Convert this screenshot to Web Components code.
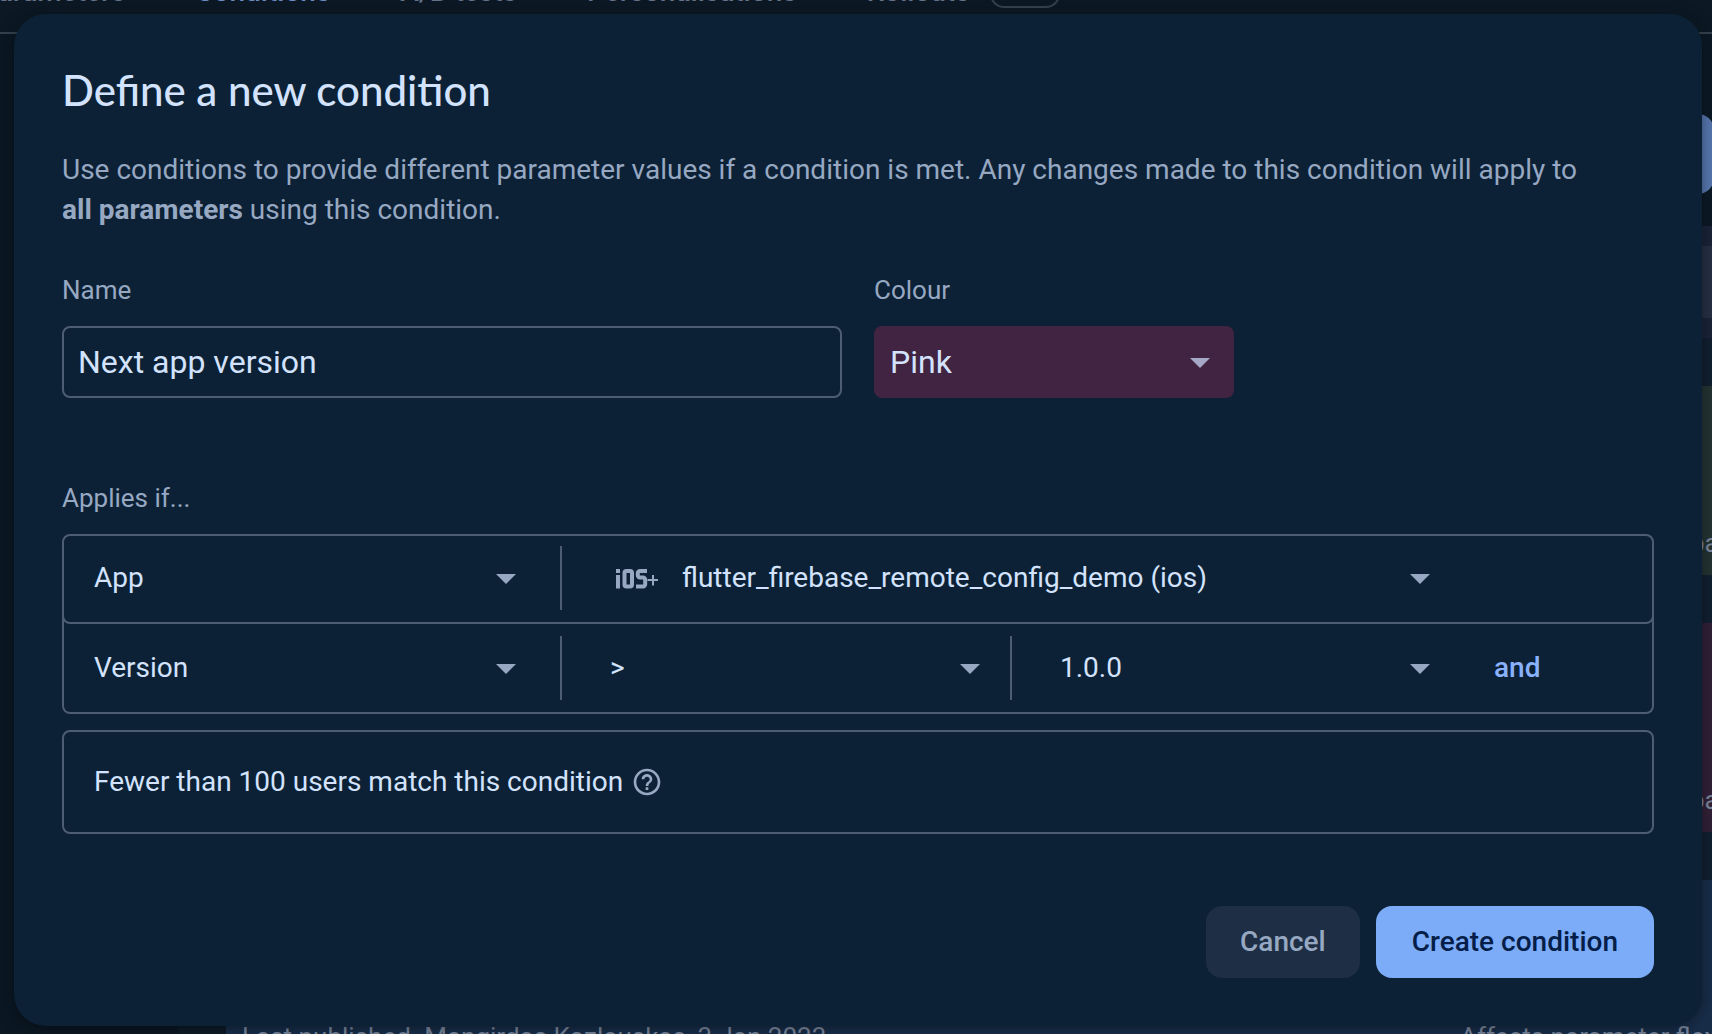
<!DOCTYPE html>
<html lang="en-GB">
<head>
<meta charset="utf-8">
<meta name="viewport" content="width=device-width, initial-scale=1">
<title>Define a new condition</title>
<style>
  html, body { margin: 0; height: 100%; }
  body {
    position: relative;
    overflow: hidden;
    background: #0c1925;
    font-family: Roboto, "Liberation Sans", sans-serif;
    font-size: 28px;
    line-height: 40px;
    color: #d3e3fd;
    --surface: #0c2135;
    --muted: #97a8c2;
    --outline: #4d5d74;
  }
</style>
</head>
<body>
<console-backdrop></console-backdrop>
<condition-dialog></condition-dialog>

<script>
const define = (name, html) => {
  const template = document.createElement('template');
  template.innerHTML = html;
  customElements.define(name, class extends HTMLElement {
    constructor() {
      super();
      this.attachShadow({ mode: 'open' }).append(template.content.cloneNode(true));
    }
  });
};

/* Drop-down: a real select with its own arrow */
customElements.define('drop-down', class extends HTMLElement {
  connectedCallback() {
    if (this.shadowRoot) return;
    const root = this.attachShadow({ mode: 'open' });
    root.innerHTML = `
      <style>
        :host { display: grid; align-items: center; }
        select, svg { grid-area: 1 / 1; }
        select {
          appearance: none; width: 100%; height: 100%; margin: 0; padding: 0 32px 0 0;
          border: 0; background: none; font: inherit; color: inherit; outline: none;
        }
        svg { justify-self: end; width: 20px; height: 12px; fill: #97a8c2; pointer-events: none; }
      </style>
      <select></select>
      <svg viewBox="0 0 20 12" aria-hidden="true"><path d="M0 2h20L10 12z"/></svg>`;
    const select = root.querySelector('select');
    select.setAttribute('aria-label', this.getAttribute('label'));
    select.add(new Option(this.getAttribute('value')));
  }
});

define('ios-icon', `
  <style>
    :host { display: block; width: 48px; height: 24px; }
    svg { display: block; fill: none; stroke: #97a8c2; stroke-width: 4; }
  </style>
  <svg width="48" height="24" viewBox="0 0 48 24" aria-hidden="true">
    <path d="M8 3v4M8 9v13.500"/>
    <rect x="14.500" y="5" width="7.500" height="15.500" rx="2"/>
    <path d="M37 5h-7a2.200 2.200 0 0 0-2.200 2.200v2a2.200 2.200 0 0 0 2.200 2.200h3a2.200 2.200 0 0 1 2.200 2.200v4.700a2.200 2.200 0 0 1-2.200 2.200h-7"/>
    <path d="M37.500 14h10.500M43 9v10.500" stroke-width="2"/>
  </svg>`);

define('help-icon', `
  <style>
    :host { display: block; width: 32px; height: 32px; }
    svg { display: block; fill: #97a8c2; }
  </style>
  <svg width="32" height="32" viewBox="0 0 24 24" aria-hidden="true">
    <path d="M11 18h2v-2h-2v2zm1-16C6.480 2 2 6.480 2 12s4.480 10 10 10 10-4.480 10-10S17.520 2 12 2zm0 18c-4.410 0-8-3.590-8-8s3.590-8 8-8 8 3.590 8 8-3.590 8-8 8zm0-14c-2.210 0-4 1.790-4 4h2c0-1.100.9-2 2-2s2 .9 2 2c0 2-3 1.750-3 5h2c0-2.250 3-2.500 3-5 0-2.210-1.790-4-4-4z"/>
  </svg>`);

define('console-tabs', `
  <style>
    :host { display: block; border-bottom: 2px solid #34404c; }
    nav {
      display: flex; align-items: center; gap: 70px; height: 56px; margin-top: -24px;
      box-sizing: border-box; padding-bottom: 24px;
      color: #66748a; font-weight: 500; white-space: nowrap;
    }
    a { color: inherit; text-decoration: none; }
    a[aria-current] { color: #6d8dc4; }
    .first { margin-left: -20px; }
    .last { display: flex; align-items: center; gap: 20px; }
    .badge { width: 66px; height: 28px; border: 2px solid #34404c; border-radius: 14px; }
  </style>
  <nav>
    <a class="first" href="#parameters">Parameters</a>
    <a href="#conditions" aria-current="page">Conditions</a>
    <a href="#tests">A/B tests</a>
    <a href="#personalisations">Personalisations</a>
    <a class="last" href="#rollouts">Rollouts <span class="badge"></span></a>
  </nav>`);

define('console-backdrop', `
  <style>
    :host { display: flex; flex-direction: column; height: 100%; overflow: hidden; font-size: 26px; color: #78859a; }
    console-tabs { font-size: 28px; }
    .body { display: grid; grid-template-columns: 178px 48px 1fr; flex: 1; min-height: 0; }
    .rail { background: #0b1723; }
    .gutter { background: #0e1b28; }
    .toolbar { display: flex; justify-content: flex-end; padding: 80px 0 32px; }
    .publish { width: 200px; height: 80px; margin-right: -2px; background: #5575ab; border-radius: 16px; }
    .filter { padding: 20px 0; background: #1a2338; }
    .filter div { height: 72px; background: #263042; }
    .gap { height: 48px; background: #121f2f; }
    .card { display: flex; justify-content: flex-end; align-items: flex-end; box-sizing: border-box; padding-bottom: 12px; }
    .card span { width: 22px; }
    .green { height: 189px; background: #233332; }
    .pink { height: 209px; background: #312037; }
    .blue {
      display: flex; justify-content: space-between; align-items: flex-start; height: 189px;
      box-sizing: border-box; padding: 137px 0 0 16px; background: #182d48; white-space: nowrap;
    }
    .blue .right { width: 252px; }
  </style>
  <console-tabs></console-tabs>
  <div class="body">
    <div class="rail"></div>
    <div class="gutter"></div>
    <main>
      <div class="toolbar"><div class="publish"></div></div>
      <div class="filter"><div></div></div>
      <div class="gap"></div>
      <div class="card green"><span>pa</span></div>
      <div class="gap"></div>
      <div class="card pink"><span>pa</span></div>
      <div class="gap"></div>
      <div class="blue"><span>Last published. Mangirdas Kazlauskas, 3 Jan 2023</span><span class="right">Affects parameter flex</span></div>
    </main>
  </div>`);

define('name-colour-fields', `
  <style>
    :host { display: grid; grid-template-columns: 780fr 360fr 388fr; column-gap: 32px; }
    .field { display: flex; flex-direction: column; gap: 20px; min-width: 0; }
    label { font-size: 26px; line-height: 32px; color: var(--muted); }
    input, .select { box-sizing: border-box; width: 100%; height: 72px; border-radius: 8px; font-size: 32px; }
    input {
      margin: 0; padding: 0 14px; border: 2px solid var(--outline); background: none;
      font-family: inherit; color: inherit; outline: none;
    }
    .select { display: grid; align-items: center; background: #412441; }
    select, svg { grid-area: 1 / 1; }
    select {
      appearance: none; width: 100%; height: 100%; margin: 0; padding: 0 48px 0 16px;
      border: 0; background: none; font: inherit; color: inherit; outline: none;
    }
    svg { justify-self: end; margin-right: 24px; fill: #a7a8c5; pointer-events: none; }
  </style>
  <div class="field">
    <label for="name">Name</label>
    <input id="name" type="text" value="Next app version">
  </div>
  <div class="field">
    <label for="colour">Colour</label>
    <div class="select">
      <select id="colour"><option>Pink</option></select>
      <svg width="20" height="12" viewBox="0 0 20 12" aria-hidden="true"><path d="M0 2h20L10 12z"/></svg>
    </div>
  </div>`);

define('condition-rules', `
  <style>
    :host { display: flex; flex-direction: column; }
    h2 { margin: 0 0 20px; font-size: 26px; line-height: 32px; font-weight: 400; color: var(--muted); }
    .row {
      display: grid; grid-template-columns: 496fr 450fr 450fr 192fr; align-items: center;
      height: 90px; box-sizing: border-box; padding-bottom: 2px;
      border: 2px solid var(--outline); border-radius: 8px;
    }
    /* The lower row slides under the rounded corners of the row above it */
    .row + .row { margin-top: -8px; padding: 8px 0 0; height: 98px; border-top: 0; border-radius: 0 0 8px 8px; }
    .cell {
      display: flex; align-items: center; gap: 24px; height: 64px; min-width: 0;
      box-sizing: border-box; padding: 0 30px 0 48px; border-left: 2px solid var(--outline);
    }
    .cell:first-child { padding: 0 44px 0 30px; border-left: 0; }
    .wide { grid-column: span 2; }
    drop-down { flex: 1; min-width: 0; height: 64px; }
    button { justify-self: start; margin: 0 0 0 34px; padding: 0; border: 0; background: none; font: inherit; font-weight: 500; color: #8ab1fb; }
    .match {
      display: flex; align-items: center; gap: 8px; height: 104px; box-sizing: border-box;
      margin-top: 16px; padding: 0 30px; border: 2px solid var(--outline); border-radius: 8px;
    }
  </style>
  <h2>Applies if...</h2>
  <div class="row">
    <div class="cell"><drop-down label="Rule type" value="App"></drop-down></div>
    <div class="cell wide"><ios-icon></ios-icon><drop-down label="App" value="flutter_firebase_remote_config_demo (ios)"></drop-down></div>
  </div>
  <div class="row">
    <div class="cell"><drop-down label="Rule type" value="Version"></drop-down></div>
    <div class="cell"><drop-down label="Operator" value="&gt;"></drop-down></div>
    <div class="cell"><drop-down label="Version" value="1.0.0"></drop-down></div>
    <button type="button">and</button>
  </div>
  <div class="match"><span>Fewer than 100 users match this condition</span><help-icon></help-icon></div>`);

define('dialog-button', `
  <style>
    :host { display: block; }
    button {
      height: 72px; margin: 0; padding: 0 34px; border: 0; border-radius: 16px;
      font: inherit; font-weight: 500; background: #1e2e44; color: #97a8c2;
    }
    :host([primary]) button { padding: 0 36px; background: #7cacf8; color: #041e49; }
  </style>
  <button type="button"><slot></slot></button>`);

define('condition-dialog', `
  <style>
    :host {
      position: absolute; inset: 14px 10px auto 14px; box-sizing: border-box;
      display: flex; flex-direction: column; padding: 48px;
      background: var(--surface); border-radius: 32px;
      box-shadow: 0 2px 10px rgba(0, 0, 0, .3), 0 4px 24px rgba(0, 0, 0, .1);
    }
    h1 { margin: 0; font-family: Lato, Roboto, sans-serif; font-size: 42px; line-height: 56px; font-weight: 500; }
    p { margin: 32px 0 44px; color: var(--muted); }
    b { display: inline-block; font-weight: 700; }
    condition-rules { margin-top: 84px; }
    footer { display: flex; justify-content: flex-end; gap: 16px; margin-top: 72px; }
  </style>
  <h1>Define a new condition</h1>
  <p>Use conditions to provide different parameter values if a condition is met. Any changes made to this condition will apply to <b>all parameters</b> using this condition.</p>
  <name-colour-fields></name-colour-fields>
  <condition-rules></condition-rules>
  <footer><dialog-button>Cancel</dialog-button><dialog-button primary>Create condition</dialog-button></footer>`);
</script>
</body>
</html>
